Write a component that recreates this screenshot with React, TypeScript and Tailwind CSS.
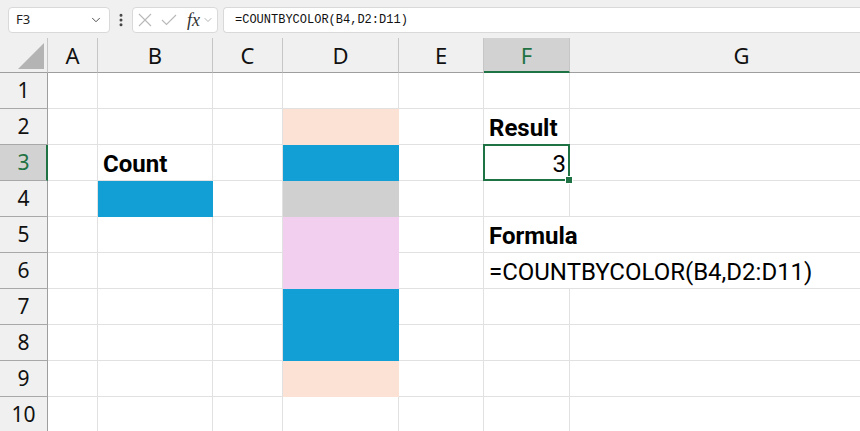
import { ChevronDown, EllipsisVertical } from 'lucide-react';

const COLS = ['A', 'B', 'C', 'D', 'E', 'F', 'G'];
const ROWS = [1, 2, 3, 4, 5, 6, 7, 8, 9, 10];

const FILLS: Record<string, string> = {
    D2: 'bg-[#fbe2d5] border-[#fbe2d5]',
    D3: 'bg-[#119fd6] border-[#119fd6]',
    D4: 'bg-[#d0d0d0] border-[#d0d0d0]',
    D5: 'bg-[#f2cfee] border-[#f2cfee]',
    D6: 'bg-[#f2cfee] border-[#f2cfee]',
    D7: 'bg-[#119fd6] border-[#119fd6]',
    D8: 'bg-[#119fd6] border-[#119fd6]',
    D9: 'bg-[#fbe2d5] border-[#fbe2d5]',
    B4: 'bg-[#119fd6] border-[#119fd6]',
};

const cellFont = { fontFamily: 'Roboto, "Liberation Sans", sans-serif' };
const headFont = { fontFamily: '"Noto Sans", "Open Sans", sans-serif' };

function CellContent({ id }: { id: string }) {
    switch (id) {
        case 'B3':
            return <span className="pl-[5px] font-bold">Count</span>;
        case 'F2':
            return <span className="pl-[5px] font-bold">Result</span>;
        case 'F3':
            return <span className="ml-auto pr-[3px]">3</span>;
        case 'F5':
            return <span className="pl-[5px] font-bold whitespace-nowrap">Formula</span>;
        case 'F6':
            return <span className="pl-[5px] whitespace-nowrap">=COUNTBYCOLOR(B4,D2:D11)</span>;
        default:
            return null;
    }
}

function FormulaBar() {
    return (
        <div className="flex h-[38px] items-center bg-[#f0f0f0] pt-[1px]">
            <div className="ml-[8px] flex h-[26px] w-[102px] items-center justify-between rounded-[4px] border border-[#d9d9d9] bg-white pl-[7px] pr-[6px] text-[13px] text-[#222]" style={headFont}>
                <span>F3</span>
                <ChevronDown className="h-[14px] w-[14px] text-[#444]" strokeWidth={1.6} />
            </div>
            <EllipsisVertical className="ml-[3px] h-[16px] w-[16px] text-[#444]" strokeWidth={2.5} />
            <div className="ml-[3px] flex h-[26px] w-[86px] items-center rounded-[4px] border border-[#d9d9d9] bg-white pl-[5px]">
                <svg width="14" height="14" viewBox="0 0 14 14" className="text-[#b8b8b8]">
                    <path d="M1 1 L13 13 M13 1 L1 13" stroke="currentColor" strokeWidth="1.1" fill="none" />
                </svg>
                <svg width="16" height="12" viewBox="0 0 16 12" className="ml-[9px] text-[#b8b8b8]">
                    <path d="M1 6 L5.5 10.5 L15 1" stroke="currentColor" strokeWidth="1.1" fill="none" />
                </svg>
                <span className="ml-[10px] text-[18px] leading-none italic text-[#333]" style={{ fontFamily: '"Liberation Serif", serif' }}>
                    fx
                </span>
                <ChevronDown className="ml-[2px] h-[12px] w-[12px] text-[#999]" strokeWidth={1.5} />
            </div>
            <div className="ml-[5px] flex h-[26px] flex-1 items-center rounded-l-[4px] border border-r-0 border-[#d9d9d9] bg-white pl-[11px] text-[12px] text-[#111]" style={{ fontFamily: '"Liberation Mono", monospace' }}>
                =COUNTBYCOLOR(B4,D2:D11)
            </div>
        </div>
    );
}

export default function App() {
    return (
        <div className="h-[431px] w-[860px] overflow-hidden bg-white">
            <FormulaBar />
            <div className="grid w-[920px] grid-cols-[48px_50px_115px_70px_116px_85px_86px_344px] grid-rows-[35px_repeat(10,36px)]">
                <div className="relative border-b border-r border-b-[#9e9e9e] border-r-[#c6c6c6] bg-[#f0f0f0]">
                    <svg className="absolute left-[18px] top-[5px]" width="26" height="26" viewBox="0 0 26 26">
                        <polygon points="26,0 26,26 0,26" fill="#b4b4b4" />
                    </svg>
                </div>
                {COLS.map((c) => (
                    <div
                        key={c}
                        className={`flex items-center justify-center border-r border-r-[#c6c6c6] text-[22px] ${
                            c === 'F'
                                ? 'border-b-2 border-b-[#1f7244] bg-[#d2d2d2] pt-[2px] text-[#1f7244]'
                                : 'border-b border-b-[#9e9e9e] bg-[#f0f0f0] text-[#111]'
                        }`}
                        style={headFont}
                    >
                        {c}
                    </div>
                ))}
                {ROWS.map((r) => (
                    <Row key={r} r={r} />
                ))}
            </div>
        </div>
    );
}

function Row({ r }: { r: number }) {
    return (
        <>
            <div
                className={`flex items-center justify-center border-b border-b-[#a8a8a8] text-[21px] ${
                    r === 3
                        ? 'border-r-2 border-r-[#1f7244] bg-[#d2d2d2] pl-[1px] text-[#1f7244]'
                        : 'border-r border-r-[#9e9e9e] bg-[#f0f0f0] text-[#111]'
                }`}
                style={headFont}
            >
                {r}
            </div>
            {COLS.map((c) => {
                const id = `${c}${r}`;
                const fill = FILLS[id] ?? 'border-[#e1e1e1]';
                const noRight = id === 'F5' || id === 'F6';
                return (
                    <div
                        key={id}
                        className={`relative flex items-end border-b pb-[4px] text-[24px] leading-none text-black ${
                            noRight ? 'border-r-0 pr-px' : 'border-r'
                        } ${fill} ${id === 'F3' ? 'z-10' : ''}`}
                        style={cellFont}
                    >
                        <CellContent id={id} />
                        {id === 'F3' ? (
                            <div className="pointer-events-none absolute -left-px -top-px bottom-[-1px] right-[-1px] border-2 border-[#1f7244]">
                                <div className="absolute -bottom-[5px] -right-[5px] h-[8px] w-[8px] border border-white bg-[#1f7244]" />
                            </div>
                        ) : null}
                    </div>
                );
            })}
        </>
    );
}
